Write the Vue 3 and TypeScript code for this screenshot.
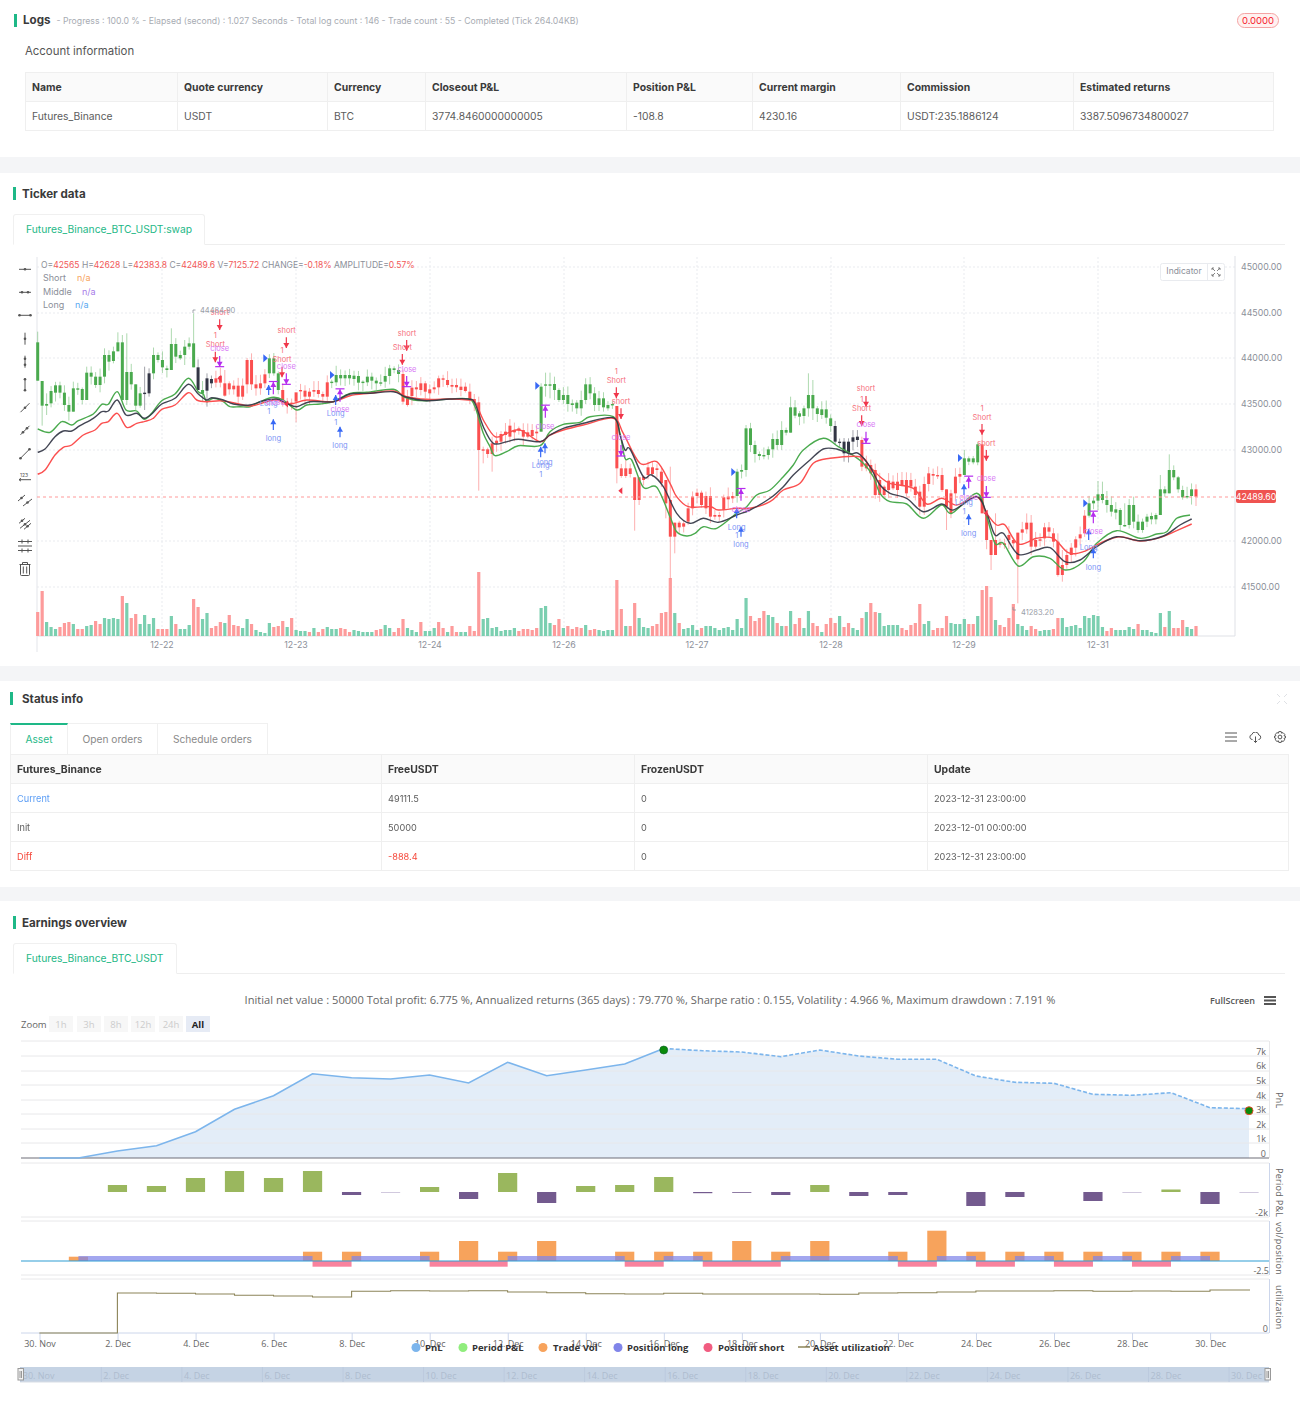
<script setup lang="ts">
const candleSrc =
  '277-392,393-467,462-467,423-460,406-428,406-428,428-465,465-485,415-485,415-417,417-450,368-450,368-380,380-405,380-405,315-380,315-335,304-333,277-304,277-450,366-450,366-403,403-467,430-467,428-430,370-430,315-370,315-330,330-352,355-360,282-360,282-320,315-325,290-315,280-290,280-352,352-420,420-430,385-422,387-400,385-398,378-398,400-437,400-418,407-418,407-440,407-440,330-403,330-403,403-415,400-415,373-400,325-370,325-370,370-420,420-460,455-465,458-460,427-455,420-423,422-440,425-440,420-425,420-432,432-440,397-440,395-398,375-397,375-385,375-385,375-385,377-387,378-398,395-398,380-397,380-392,392-400,397-400,378-395,355-378,355-360,360-372,372-455,440-465,413-438,412-418,400-420,400-425,418-430,412-418,385-412,385-388,390-405,' +
  '405-410,405-412,410-420,410-423,425-447,447-457,457-600,598-600,598-612,580-612,572-580,552-575,545-555,527-560,540-547,535-542,540-560,547-560,540-558,545-550,410-545,403-405,403-405,402-420,420-450,435-450,435-462,460-465,458-475,450-475,403-450,403-430,430-465,445-465,445-472,465-475,462-465,468-655,655-678,655-678,655-672,682-750,682-750,680-690,652-675,652-672,655-660,665-700,690-760,750-860,818-860,818-832,820-830,775-815,740-775,728-738,728-765,738-775,738-800,795-800,795-800,742-780,740-748,738-745,665-738,660-665,535-660,535-585,585-612,612-618,615-617,598-615,567-598,567-585,540-585,540-548,472-548,472-497,490-500,475-498,435-475,435-475,475-492,478-495,478-503,505-528,528-575,575-578,575-610,575-610,562-575,560-570,570-650,640-655,645-670,660-735,690-735,' +
  '710-735,692-720,695-715,695-720,690-705,690-730,690-710,710-735,725-770,702-770,670-702,672-677,675-678,675-720,718-770,730-790,680-730,672-680,625-675,625-635,625-637,583-637,583-790,790-870,870-915,870-915,880-883,880-885,855-870,870-880,848-928,838-848,818-838,818-890,870-890,868-872,832-865,832-845,850-875,875-975,945-975,915-945,893-915,868-893,853-865,797-850,760-797,752-760,733-752,732-750,750-765,765-785,778-788,780-825,825-827,765-825,765-815,815-840,815-840,800-815,798-808,795-808,718-795,718-730,660-730,660-682,682-718,720-742,738-742,718-738,718-740'

const colorRanges: [number, number, string][] = [
  [0, 23, 'g'], [24, 25, 'k'], [26, 35, 'g'], [36, 36, 'k'], [37, 37, 'g'], [38, 39, 'k'], [40, 51, 'r'], [52, 54, 'g'],
  [55, 65, 'r'], [66, 81, 'g'], [82, 112, 'r'], [113, 129, 'g'], [130, 156, 'r'], [157, 178, 'g'], [179, 184, 'k'],
  [185, 207, 'r'], [208, 211, 'g'], [212, 235, 'r'], [236, 259, 'g'], [260, 260, 'r']
]
const palette: Record<string, string> = { g: '#4aaa4e', r: '#fb4f4f', k: '#333645' }

const wickOverride: Record<number, [number, number]> = {
  0: [245, 392], 1: [393, 527], 2: [430, 495], 5: [395, 445], 7: [440, 512], 8: [395, 485], 11: [350, 450], 15: [295, 400],
  17: [290, 340], 18: [247, 304], 19: [255, 450], 20: [250, 465], 22: [403, 480], 24: [350, 480], 25: [355, 440], 30: [235, 360],
  33: [270, 345], 35: [190, 352], 36: [328, 420], 38: [370, 470], 42: [360, 440], 48: [310, 420], 55: [400, 470], 58: [455, 517],
  99: [440, 722], 100: [590, 640], 102: [560, 665], 130: [470, 700], 134: [682, 842], 135: [682, 765], 142: [650, 985], 143: [818, 910],
  113: [400, 545], 114: [368, 440], 115: [368, 445], 116: [380, 450], 141: [690, 805], 159: [525, 680], 169: [440, 548], 173: [370, 500], 174: [390, 510],
  212: [548, 790], 214: [870, 960], 215: [790, 915], 220: [848, 1060], 204: [718, 840], 199: [680, 795], 229: [850, 980], 230: [900, 995],
  208: [600, 675], 238: [693, 780], 239: [695, 760], 254: [613, 730], 252: [675, 795], 246: [740, 835], 244: [760, 830], 260: [703, 768]
}

const rnd = (i: number, s: number) => {
  const v = Math.sin(i * 12.9898 + s * 78.233) * 43758.5453
  return v - Math.floor(v)
}
const cx = (i: number) => 37.7 + 4.455 * i
const zy = (v: number) => 250 + v / 3

const candles = candleSrc.split(',').map((s, i) => {
  const [a, b] = s.split('-').map(Number)
  const code = colorRanges.find((r) => i >= r[0] && i <= r[1])?.[2] ?? 'g'
  const ov = wickOverride[i]
  const hi = ov ? ov[0] : a - 4 - rnd(i, 1) * 24
  const lo = ov ? ov[1] : b + 4 + rnd(i, 2) * 24
  return {
    x: cx(i),
    top: zy(a),
    h: Math.max(1.4, (b - a) / 3),
    hi: zy(hi),
    lo: zy(lo),
    color: palette[code]
  }
})

const volSrc =
  '24r,45r,14g,9g,7g,9r,13r,14r,12g,7r,7r,10g,11g,15r,12r,18g,17g,18g,17g,40r,33g,18r,22r,12g,21g,12g,18g,7r,7r,7r,20g,12r,7g,7g,11g,37r,29r,17g,23g,8r,10r,14r,13g,21r,11r,10r,8g,17g,12r,6g,4g,3g,13g,9r,10r,15r,9g,18r,6g,5g,5g,4r,8g,4r,7r,9g,7g,7g,8r,7r,4r,6g,5g,4g,4g,4g,6r,7r,11g,8g,4r,8r,17r,8g,6g,4g,14r,5g,5g,8g,14r,8r,4g,' +
  '10r,4r,4g,4g,10r,5r,64r,17g,18g,8g,9g,5g,6g,6g,8g,5r,7r,7r,6r,8r,28g,30g,13g,11r,17r,8g,10r,7r,9r,8r,11g,6r,7r,6g,5g,6g,6g,56r,27r,10g,10r,33r,18g,9g,8g,10r,12r,23r,24r,58r,23g,13r,7g,8g,11g,6g,8r,10g,10g,8g,6g,8g,9g,6g,17g,8g,38g,20r,15r,18r,25r,21g,19g,13r,10g,10r,25g,12r,18r,8g,25g,13r,10r,4g,12r,18r,13r,20g,9r,13r,8g,6g,18r,24g,33r,24r,23g,' +
  '10g,11g,11g,11g,8r,6r,11r,13r,32r,12g,15g,6r,8r,8r,20r,13g,12g,12g,17g,12r,12r,20g,46r,50r,39r,16g,11r,9r,18r,32r,12g,10g,6g,10r,7r,5g,6g,6g,7r,18r,18g,9g,10g,11g,8g,20g,18g,21g,20g,9g,5r,8r,6g,6g,6g,9g,7g,12r,6g,6g,4g,3g,23g,9r,25g,8r,8r,16r,9g,7g,10r'
const vols = volSrc.split(',').map((s, i) => {
  const h = parseInt(s, 10)
  return { x: cx(i), h, y: 636 - h, color: s.endsWith('r') ? '#fd9b9b' : '#7bcfb0' }
})

type P = [number, number]
const zone = (off: number, pts: P[]): P[] => pts.map(([x, y]) => [off + x / 3, zy(y)] as P)
const smooth = (pts: P[]) => {
  let d = `M${pts[0][0].toFixed(1)} ${pts[0][1].toFixed(1)}`
  for (let i = 0; i < pts.length - 1; i++) {
    const p0 = pts[Math.max(0, i - 1)]
    const p1 = pts[i]
    const p2 = pts[i + 1]
    const p3 = pts[Math.min(pts.length - 1, i + 2)]
    const c1x = p1[0] + (p2[0] - p0[0]) / 6
    const c1y = p1[1] + (p2[1] - p0[1]) / 6
    const c2x = p2[0] - (p3[0] - p1[0]) / 6
    const c2y = p2[1] - (p3[1] - p1[1]) / 6
    d += `C${c1x.toFixed(1)} ${c1y.toFixed(1)} ${c2x.toFixed(1)} ${c2y.toFixed(1)} ${p2[0].toFixed(1)} ${p2[1].toFixed(1)}`
  }
  return d
}

const lineGreen = smooth([
  ...zone(0, [[113, 537], [150, 547], [185, 515], [215, 525], [235, 512], [280, 492], [305, 463], [325, 463], [352, 425], [378, 480], [410, 483], [432, 508], [455, 490], [485, 452], [525, 432], [565, 385], [595, 425], [610, 432], [620, 455], [640, 445], [670, 455], [690, 470], [720, 470], [750, 470], [780, 455], [820, 442], [850, 450], [890, 480], [920, 465], [960, 462], [1000, 455], [1050, 430], [1100, 427], [1180, 418], [1210, 440], [1240, 450], [1280, 452], [1350, 447]]),
  ...zone(450, [[55, 447], [75, 470], [100, 550], [120, 590], [135, 617], [170, 605], [205, 587], [270, 587], [300, 545], [340, 523], [390, 517], [420, 500], [490, 500], [510, 550], [525, 625], [545, 630], [580, 712], [620, 712], [660, 800], [680, 845], [710, 858], [735, 850], [760, 830], [800, 835], [860, 790], [890, 770], [920, 735], [960, 720], [1000, 680], [1030, 645], [1060, 600], [1120, 565], [1165, 590], [1200, 610], [1240, 640], [1270, 680]]),
  ...zone(880, [[0, 730], [30, 755], [80, 762], [130, 805], [185, 765], [215, 790], [290, 730], [320, 800], [345, 880], [370, 880], [415, 948], [460, 920], [510, 925], [555, 960], [610, 935], [650, 880], [710, 842], [780, 865], [830, 852], [860, 845], [890, 805], [930, 795]])
])
const lineBlack = smooth([
  ...zone(0, [[113, 607], [135, 597], [165, 560], [190, 543], [215, 543], [240, 527], [280, 505], [305, 485], [325, 483], [352, 450], [378, 495], [410, 490], [432, 505], [455, 492], [485, 462], [525, 445], [565, 403], [595, 432], [620, 450], [635, 443], [670, 450], [700, 462], [750, 465], [790, 452], [830, 447], [860, 460], [890, 470], [930, 455], [1000, 455], [1050, 432], [1110, 430], [1180, 425], [1220, 442], [1280, 452], [1350, 447]]),
  ...zone(450, [[55, 447], [75, 460], [100, 530], [130, 580], [170, 575], [205, 568], [270, 575], [300, 555], [340, 535], [400, 520], [490, 503], [510, 555], [525, 600], [540, 597], [580, 680], [605, 675], [640, 710], [680, 790], [720, 820], [760, 805], [805, 817], [860, 795], [900, 780], [960, 745], [1000, 710], [1030, 675], [1080, 630], [1120, 597], [1160, 597], [1200, 612], [1225, 610], [1260, 650]]),
  ...zone(880, [[0, 705], [30, 730], [80, 745], [130, 785], [185, 762], [220, 780], [290, 740], [320, 790], [345, 855], [370, 850], [415, 913], [470, 900], [510, 893], [555, 935], [600, 930], [650, 890], [710, 860], [780, 872], [850, 858], [900, 825], [935, 807]])
])
const lineRed = smooth([
  ...zone(0, [[113, 673], [135, 660], [165, 615], [190, 592], [215, 585], [250, 555], [285, 540], [305, 520], [325, 515], [352, 490], [380, 532], [410, 520], [432, 515], [460, 505], [485, 478], [525, 465], [565, 428], [590, 450], [620, 455], [660, 452], [700, 458], [750, 468], [800, 455], [830, 450], [870, 462], [920, 450], [1000, 455], [1050, 437], [1110, 430], [1180, 423], [1220, 440], [1280, 448], [1350, 447]]),
  ...zone(450, [[55, 450], [75, 455], [100, 510], [135, 560], [170, 550], [210, 540], [270, 575], [300, 555], [340, 540], [400, 525], [490, 505], [520, 550], [570, 640], [620, 635], [660, 700], [680, 740], [715, 770], [780, 770], [805, 780], [860, 775], [900, 775], [960, 755], [1000, 720], [1050, 700], [1090, 640], [1140, 625], [1230, 620], [1260, 650]]),
  ...zone(880, [[0, 680], [30, 700], [100, 715], [140, 762], [185, 745], [230, 765], [290, 740], [320, 790], [350, 825], [375, 825], [415, 882], [470, 865], [520, 865], [565, 908], [610, 905], [670, 875], [720, 860], [780, 873], [840, 863], [890, 842], [935, 822]])
])

const Z2 = 0
const Z3 = 450
const Z4 = 880
const labelColor: Record<string, string> = { s: '#f6707d', c: '#d878f5', l: '#7c94f5' }
const rawLabels: [number, string, number, number, string][] = [
  [Z2, 'short', 660, 187, 's'], [Z2, '1', 646, 256, 's'], [Z2, 'Short', 646, 284, 's'], [Z2, 'close', 659, 295, 'c'],
  [Z2, 'short', 860, 241, 's'], [Z2, '1', 846, 302, 's'], [Z2, 'Short', 846, 329, 's'], [Z2, 'close', 859, 348, 'c'],
  [Z2, 'short', 1221, 250, 's'], [Z2, 'Short', 1207, 291, 's'], [Z2, 'close', 1221, 357, 'c'],
  [Z2, 'Long', 806, 459, 'l'], [Z2, 'close', 826, 456, 'c'], [Z2, '1', 806, 485, 'l'], [Z2, 'long', 820, 564, 'l'],
  [Z2, 'close', 1020, 479, 'c'], [Z2, 'Long', 1007, 490, 'l'], [Z2, '1', 1007, 516, 'l'], [Z2, 'long', 1020, 587, 'l'],
  [Z3, 'close', 285, 528, 'c'], [Z3, 'long', 285, 636, 'l'], [Z3, 'Long', 272, 647, 'l'], [Z3, '1', 272, 673, 'l'],
  [Z3, '1', 499, 363, 's'], [Z3, 'Short', 499, 390, 's'], [Z3, 'short', 513, 455, 's'], [Z3, 'close', 513, 562, 'c'],
  [Z3, 'close', 873, 778, 'c'], [Z3, 'Long', 860, 832, 'l'], [Z3, '1', 860, 857, 'l'], [Z3, 'long', 873, 884, 'l'],
  [Z3, 'short', 1248, 416, 's'], [Z3, '1', 1235, 447, 's'], [Z3, 'Short', 1235, 474, 's'], [Z3, 'close', 1248, 524, 'c'],
  [Z4, '1', 306, 474, 's'], [Z4, 'Short', 306, 501, 's'], [Z4, 'short', 319, 579, 's'], [Z4, 'close', 319, 686, 'c'],
  [Z4, 'close', 266, 743, 'c'], [Z4, 'Long', 252, 758, 'l'], [Z4, '1', 252, 784, 'l'], [Z4, 'long', 266, 849, 'l'],
  [Z4, 'close', 640, 845, 'c'], [Z4, 'Long', 626, 893, 'l'], [Z4, 'long', 640, 951, 'l']
]
const labels = rawLabels.map(([o, t, x, y, c]) => ({ t, x: o + x / 3, y: zy(y) + 2.6, color: labelColor[c] }))

const rawArrows: [number, string, number, number, number][] = [
  [Z2, 'r', 659, 208, 240], [Z2, 'r', 646, 305, 337], [Z2, 'pd', 659, 318, 350],
  [Z2, 'r', 859, 262, 294], [Z2, 'r', 846, 350, 382], [Z2, 'pd', 859, 370, 403],
  [Z2, 'r', 1220, 270, 302], [Z2, 'r', 1207, 312, 344], [Z2, 'pd', 1220, 378, 410],
  [Z2, 'b', 806, 405, 435], [Z2, 'pu', 820, 396, 433], [Z2, 'b', 820, 508, 540],
  [Z2, 'pu', 1020, 418, 455], [Z2, 'b', 1007, 435, 465], [Z2, 'b', 1020, 530, 562],
  [Z3, 'pu', 286, 467, 503], [Z3, 'b', 272, 590, 622], [Z3, 'b', 285, 580, 610],
  [Z3, 'r', 499, 412, 444], [Z3, 'r', 513, 475, 507], [Z3, 'pd', 513, 585, 618],
  [Z3, 'pu', 873, 717, 752], [Z3, 'b', 860, 775, 805], [Z3, 'b', 873, 830, 860],
  [Z3, 'r', 1248, 438, 470], [Z3, 'r', 1235, 496, 528], [Z3, 'pd', 1248, 545, 580],
  [Z4, 'r', 306, 522, 554], [Z4, 'r', 319, 600, 632], [Z4, 'pd', 319, 708, 742],
  [Z4, 'pu', 266, 680, 715], [Z4, 'b', 252, 703, 735], [Z4, 'b', 266, 793, 825],
  [Z4, 'pu', 640, 785, 820], [Z4, 'b', 626, 838, 870], [Z4, 'b', 640, 895, 925]
]
const arrows = rawArrows.map(([o, k, x, a, b]) => {
  const X = o + x / 3
  const y1 = zy(a)
  const y2 = zy(b)
  const down = k === 'r' || k === 'pd'
  const color = k === 'r' ? '#f0364a' : k === 'b' ? '#3768f5' : '#b52bee'
  const head = down
    ? `${X - 3},${y2 - 5} ${X + 3},${y2 - 5} ${X},${y2}`
    : `${X - 3},${y1 + 5} ${X + 3},${y1 + 5} ${X},${y1}`
  const barY = k === 'pd' ? y2 : k === 'pu' ? y1 - 0.5 : null
  return { X, y1, y2, color, head, barY }
})
const rawTri: [number, number, number, string][] = [
  [Z2, 790, 325, 'b'], [Z2, 990, 375, 'b'], [Z3, 256, 407, 'b'], [Z3, 844, 666, 'b'], [Z4, 234, 624, 'b'], [Z4, 610, 760, 'b'],
  [Z2, 664, 385, 'r'], [Z2, 864, 462, 'r'], [Z3, 517, 722, 'r'], [Z4, 323, 790, 'r']
]
const tris = rawTri.map(([o, x, y, k]) => {
  const X = o + x / 3
  const Y = zy(y)
  return k === 'b'
    ? { p: `${X},${Y - 4} ${X + 4.5},${Y} ${X},${Y + 4}`, c: '#3768f5' }
    : { p: `${X},${Y - 3.5} ${X - 4},${Y} ${X},${Y + 3.5}`, c: '#f0364a' }
})

const gridY = [313, 358, 404, 450, 541, 587, 267]
const gridX = [162, 296, 430, 564, 697, 831, 964, 1098]
const dates = ['12-22', '12-23', '12-24', '12-26', '12-27', '12-28', '12-29', '12-31']
const priceTicks = [['45000.00', 267], ['44500.00', 313], ['44000.00', 358], ['43500.00', 404], ['43000.00', 450], ['42000.00', 541], ['41500.00', 587]] as [string, number][]

const toolY = [269.3, 292.3, 315.3, 338.7, 361.7, 384.7, 407.7, 430.3, 453.7, 476.7, 500, 523.3, 546, 569]
const tools: { d: string; dots: P[] }[] = [
  { d: 'M-6 0H6', dots: [[0, 0]] },
  { d: 'M-6 0H6', dots: [[-3, 0], [3, 0]] },
  { d: 'M-6 0H6', dots: [[-5.5, 0], [5.5, 0]] },
  { d: 'M0-6V6', dots: [[0, 0]] },
  { d: 'M0-6V6', dots: [[0, -3], [0, 3]] },
  { d: 'M0-6V6', dots: [[0, -5.5], [0, 5.5]] },
  { d: 'M-4.5 4.5L4.5-4.5', dots: [[0, 0]] },
  { d: 'M-4.5 4.5L4.5-4.5', dots: [[-2, 2], [2, -2]] },
  { d: 'M-4.5 4.5L4.5-4.5', dots: [[-4.5, 4.5], [4.5, -4.5]] },
  { d: 'M-6 3H6M-6 3L-4 1.6M-6 3L-4 4.4', dots: [] },
  { d: 'M-7 1L0-5M-2 6L7-1', dots: [[-3.5, -2], [2.5, 2.5]] },
  { d: 'M-6 0L0-5M-5 5L5-3M-1 6L6 0', dots: [[-3, -2.5], [0, 1], [2.5, 3]] },
  { d: 'M-7-4.5H7M-7 0H7M-7 4.5H7M-3-6.5V-2.5M3-6.5V-2.5M-3 2.5V6.5M3 2.5V6.5', dots: [] },
  { d: 'M-5.5-4.5H5.5M-2.5-4.5V-6.5H2.5V-4.5M-4.5-4.5V5.5Q-4.5 6.5-3.5 6.5H3.5Q4.5 6.5 4.5 5.5V-4.5M-1.7-2.5V4.5M1.7-2.5V4.5', dots: [] }
]

const dx = (i: number) => 39.4 + 39.02 * i
const pnlY = [1158, 1158, 1151, 1145.7, 1131.7, 1109.3, 1095.7, 1073.7, 1077.7, 1079, 1075, 1083, 1062.3, 1075.7, 1070, 1064, 1048.5]
const pnlAfter = [1048.5, 1050.7, 1052, 1056.7, 1050, 1056, 1059.3, 1059.3, 1076, 1082.3, 1083.3, 1094.3, 1095.3, 1092.7, 1107.7, 1108.7]
const pnlSolid = pnlY.map((y, i) => `${dx(i).toFixed(1)},${y}`).join(' ')
const pnlDash = pnlAfter.map((y, i) => `${dx(i + 16).toFixed(1)},${y}`).join(' ')
const pnlArea = `${dx(0)},1158 ${pnlSolid} ${pnlDash} ${dx(31)},1158`

const pnlBars: [number, number, string][] = [
  [2, 1185, 'g'], [3, 1186, 'g'], [4, 1178, 'g'], [5, 1171, 'g'], [6, 1178, 'g'], [7, 1171, 'g'], [8, 1195, 'p'], [9, 1192.8, 'l'],
  [10, 1187, 'g'], [11, 1199, 'p'], [12, 1173, 'g'], [13, 1203, 'p'], [14, 1186, 'g'], [15, 1185, 'g'], [16, 1177, 'g'], [17, 1193.2, 'p'],
  [18, 1192.8, 'p'], [19, 1195, 'p'], [20, 1185, 'g'], [21, 1196, 'p'], [22, 1195, 'p'], [24, 1206, 'p'], [25, 1197, 'p'], [27, 1201, 'p'],
  [28, 1192.8, 'l'], [29, 1189.5, 'g'], [30, 1204, 'p'], [31, 1192.8, 'l']
]
const barFill: Record<string, string> = { g: '#9ab75e', p: '#735a8e', l: '#c6bcd6' }
const periodBars = pnlBars.map(([i, y, k]) => ({
  x: dx(i) - 9.6,
  y: Math.min(y, 1192),
  h: Math.abs(y - 1192),
  c: barFill[k]
}))

const volDay: [number, number][] = [
  [1, 1256.7], [7, 1251.7], [8, 1251.7], [10, 1251.7], [11, 1241], [12, 1251.7], [13, 1241], [15, 1251.7], [16, 1251.7], [17, 1251.7],
  [18, 1241], [19, 1251.7], [20, 1241], [22, 1251.7], [23, 1230.7], [24, 1251.7], [25, 1251.7], [26, 1251.7], [27, 1251.7], [28, 1251.7],
  [29, 1251.7], [30, 1251.7]
]
const orangeBars = volDay.map(([i, y]) => ({ x: dx(i) - 9.6, y, h: 1261 - y }))
const longRanges: P[] = [[1, 7], [8, 10], [12, 15], [16, 17], [19, 22], [23, 24], [25, 26], [27, 28], [29, 30]]
const shortRanges: P[] = [[7, 8], [10, 12], [15, 16], [17, 19], [22, 23], [24, 25], [26, 27], [28, 29]]
const rangeRect = (r: P) => ({ x: dx(r[0]), w: dx(r[1]) - dx(r[0]) })
const longBars = longRanges.map(rangeRect)
const shortBars = shortRanges.map(rangeRect)

const utilSteps = [1333, 1333, 1293, 1293.3, 1294, 1295.3, 1296, 1297, 1291.3, 1290.7, 1291, 1290.7, 1292, 1292.7, 1293.7, 1294, 1293.3, 1294, 1294, 1294, 1294.3, 1293, 1292.7, 1292, 1291, 1291, 1290.7, 1291.3, 1291, 1291.3, 1290, 1290]
const utilPath = utilSteps
  .map((y, i) => {
    const x = dx(i)
    return i === 0 ? `M${x} ${y}` : `H${x.toFixed(1)}V${y}`
  })
  .join('') + `H${dx(31) + 1}`

const yPnl = [['7k', 1055], ['6k', 1069], ['5k', 1084], ['4k', 1099], ['3k', 1113], ['2k', 1128], ['1k', 1142], ['0', 1157]] as [string, number][]
const gridPnl = [1041, 1056, 1071, 1085, 1100, 1114, 1129, 1143]
const months = ['30. Nov', '2. Dec', '4. Dec', '6. Dec', '8. Dec', '10. Dec', '12. Dec', '14. Dec', '16. Dec', '18. Dec', '20. Dec', '22. Dec', '24. Dec', '26. Dec', '28. Dec', '30. Dec']
const dateTicks = months.map((t, i) => ({ t, x: dx(i * 2) + 0.6 }))
const navTicks = months.map((t, i) => ({ t, x: 22.8 + 80.55 * i }))
const zoomBtns = [['1h', 49], ['3h', 77], ['8h', 104], ['12h', 131], ['24h', 159]] as [string, number][]
const legendDots = [
  { t: 'PnL', x: 416, c: '#7cb5ec', tx: 425 },
  { t: 'Period P&L', x: 463, c: '#90ed7d', tx: 472 },
  { t: 'Trade Vol', x: 543, c: '#f7a35c', tx: 553 },
  { t: 'Position long', x: 618, c: '#8085e9', tx: 627 },
  { t: 'Position short', x: 708, c: '#f15c80', tx: 718 }
]

const accountHead = ['Name', 'Quote currency', 'Currency', 'Closeout P&L', 'Position P&L', 'Current margin', 'Commission', 'Estimated returns']
const accountRow = ['Futures_Binance', 'USDT', 'BTC', '3774.8460000000005', '-108.8', '4230.16', 'USDT:235.1886124', '3387.5096734800027']
const accountWidths = [152, 150, 98, 201, 126, 148, 173, 200]
const statusWidths = [371, 253, 293, 361]
const statusRows = [
  { name: 'Current', cls: 'blue', free: '49111.5', freeCls: '', frozen: '0', update: '2023-12-31 23:00:00' },
  { name: 'Init', cls: '', free: '50000', freeCls: '', frozen: '0', update: '2023-12-01 00:00:00' },
  { name: 'Diff', cls: 'red', free: '-888.4', freeCls: 'red', frozen: '0', update: '2023-12-31 23:00:00' }
]
</script>

<template>
  <div class="page">
    <section class="card logs">
      <div class="logs-head">
        <div class="title">Logs</div>
        <span class="progress">- Progress : 100.0 % - Elapsed (second) : 1.027 Seconds - Total log count : 146 - Trade count : 55 - Completed (Tick 264.04KB)</span>
        <span class="badge">0.0000</span>
      </div>
      <div class="account">Account information</div>
      <table class="tbl tbl-account">
        <colgroup><col v-for="w in accountWidths" :key="w" :width="w" /></colgroup>
        <thead><tr><th v-for="h in accountHead" :key="h">{{ h }}</th></tr></thead>
        <tbody><tr><td v-for="c in accountRow" :key="c">{{ c }}</td></tr></tbody>
      </table>
    </section>

    <section class="card ticker">
      <div class="title">Ticker data</div>
      <div class="tabline"><div class="tab">Futures_Binance_BTC_USDT:swap</div></div>
      <svg class="chart" width="1300" height="421" viewBox="0 245 1300 421">
        <g stroke="#e9ebef" stroke-dasharray="2 2">
          <line v-for="y in gridY" :key="y" x1="37" x2="1235" :y1="y" :y2="y" />
          <line v-for="x in gridX" :key="x" :x1="x" :x2="x" y1="257" y2="636" />
        </g>
        <line x1="37" x2="37" y1="257" y2="652" stroke="#e3e5ea" />
        <line x1="1235" x2="1235" y1="256" y2="636" stroke="#dfe1e6" />
        <line x1="37" x2="1235" y1="636" y2="636" stroke="#dfe1e6" />

        <rect v-for="(v, i) in vols" :key="'v' + i" :x="v.x - 1.6" :y="v.y" width="3.2" :height="v.h" :fill="v.color" />

        <g v-for="(c, i) in candles" :key="'c' + i">
          <line :x1="c.x" :x2="c.x" :y1="c.hi" :y2="c.lo" :stroke="c.color" stroke-opacity=".45" />
          <rect :x="c.x - 1.5" :y="c.top" width="3" :height="c.h" :fill="c.color" />
        </g>

        <line x1="37" x2="1235" y1="497" y2="497" stroke="#f99" stroke-dasharray="3 3" />

        <path :d="lineGreen" fill="none" stroke="#4aaa4e" stroke-width="1.4" />
        <path :d="lineRed" fill="none" stroke="#fb4f4f" stroke-width="1.4" />
        <path :d="lineBlack" fill="none" stroke="#333645" stroke-width="1.4" stroke-opacity=".92" />

        <polygon v-for="(t, i) in tris" :key="'t' + i" :points="t.p" :fill="t.c" />
        <g v-for="(a, i) in arrows" :key="'a' + i">
          <line :x1="a.X" :x2="a.X" :y1="a.y1" :y2="a.y2" :stroke="a.color" stroke-width="1.2" />
          <polygon :points="a.head" :fill="a.color" />
          <line v-if="a.barY !== null" :x1="a.X - 4.5" :x2="a.X + 4.5" :y1="a.barY" :y2="a.barY" :stroke="a.color" stroke-width="1.2" />
        </g>
        <text v-for="(l, i) in labels" :key="'l' + i" class="mark" :x="l.x" :y="l.y" :fill="l.color" text-anchor="middle">{{ l.t }}</text>

        <path d="M193 313V310H195.5" fill="none" stroke="#8a8f99" stroke-width=".8" />
        <text class="mark" x="200" y="313" fill="#9a9ea8">44484.90</text>
        <path d="M1013 607V610H1016" fill="none" stroke="#8a8f99" stroke-width=".8" />
        <text class="mark" x="1021" y="615" fill="#9a9ea8">41283.20</text>

        <text class="legend top" x="41" y="268">
          <tspan class="grey">O=</tspan><tspan class="val">42565 </tspan><tspan class="grey">H=</tspan><tspan class="val">42628 </tspan><tspan class="grey">L=</tspan><tspan class="val">42383.8 </tspan><tspan class="grey">C=</tspan><tspan class="val">42489.6 </tspan><tspan class="grey">V=</tspan><tspan class="val">7125.72 </tspan><tspan class="grey">CHANGE=</tspan><tspan class="val">-0.18% </tspan><tspan class="grey">AMPLITUDE=</tspan><tspan class="val">0.57%</tspan>
        </text>
        <text class="legend grey" x="43" y="281">Short</text><text class="legend" x="77" y="281" fill="#f7a35c">n/a</text>
        <text class="legend grey" x="43" y="294.5">Middle</text><text class="legend" x="82" y="294.5" fill="#a77be8">n/a</text>
        <text class="legend grey" x="43" y="308">Long</text><text class="legend" x="75" y="308" fill="#5aa9f0">n/a</text>

        <g v-for="(t, i) in tools" :key="'i' + i" :transform="`translate(25 ${toolY[i]})`">
          <path :d="t.d" fill="none" stroke="#555" stroke-width="1" />
          <circle v-for="(d, j) in t.dots" :key="j" :cx="d[0]" :cy="d[1]" r="1.3" fill="#555" />
          <text v-if="i === 9" x="-1" y="0.5" class="tiny" text-anchor="middle">123</text>
        </g>

        <text v-for="(d, i) in dates" :key="d" class="axis" :x="gridX[i]" y="648" text-anchor="middle">{{ d }}</text>
        <text v-for="p in priceTicks" :key="p[0]" class="axis" x="1241" :y="p[1] + 3">{{ p[0] }}</text>
        <rect x="1236" y="490" width="40" height="13" rx="2" fill="#ef5350" />
        <text class="tag" x="1256" y="500" text-anchor="middle">42489.60</text>

        <rect x="1160.5" y="263.5" width="64" height="17" rx="2" fill="#fff" stroke="#e9ebef" />
        <line x1="1207.5" x2="1207.5" y1="264" y2="280" stroke="#e9ebef" />
        <text class="indicator" x="1184" y="274" text-anchor="middle">Indicator</text>
        <path d="M1212 268l3 3M1212 268h2M1212 268v2M1220 268l-3 3M1220 268h-2M1220 268v2M1212 276l3-3M1212 276h2M1212 276v-2M1220 276l-3-3M1220 276h-2M1220 276v-2" fill="none" stroke="#777" stroke-width=".9" />
      </svg>
    </section>

    <section class="card status">
      <div class="title t-status">Status info</div>
      <svg class="expand" width="10" height="10" viewBox="0 0 10 10"><path d="M0 0l3 3M10 0L7 3M0 10l3-3M10 10L7 7" stroke="#dfe1e5" fill="none" /></svg>
      <div class="status-tabs">
        <div class="stab active">Asset</div>
        <div class="stab">Open orders</div>
        <div class="stab">Schedule orders</div>
        <div class="tools">
          <svg width="12" height="10" viewBox="0 0 12 10"><path d="M0 1H12M0 5H12M0 9H12" stroke="#555" fill="none" /></svg>
          <svg width="13" height="11" viewBox="0 0 13 11"><path d="M3.5 7.5H3A2.5 2.5 0 0 1 2.8 2.6 3.6 3.6 0 0 1 9.8 3 2.3 2.3 0 0 1 10 7.5H9.5M6.5 4.5V10.5M4.8 8.8L6.5 10.5 8.2 8.8" stroke="#555" fill="none" /></svg>
          <svg width="12" height="12" viewBox="0 0 12 12"><path d="M4.8.6H7.2L7.6 2.2 9 1.6 10.8 3.4 10 4.8 11.4 5V7L10 7.4 10.8 8.8 9 10.5 7.6 9.8 7.2 11.4H4.8L4.4 9.8 3 10.5 1.2 8.8 2 7.4.6 7V5L2 4.8 1.2 3.4 3 1.6 4.4 2.2Z" stroke="#555" fill="none" /><circle cx="6" cy="6" r="1.9" stroke="#555" fill="none" /></svg>
        </div>
      </div>
      <table class="tbl tbl-status">
        <colgroup><col v-for="w in statusWidths" :key="w" :width="w" /></colgroup>
        <thead><tr><th>Futures_Binance</th><th>FreeUSDT</th><th>FrozenUSDT</th><th>Update</th></tr></thead>
        <tbody>
          <tr v-for="r in statusRows" :key="r.name">
            <td :class="r.cls">{{ r.name }}</td>
            <td :class="r.freeCls">{{ r.free }}</td>
            <td>{{ r.frozen }}</td>
            <td>{{ r.update }}</td>
          </tr>
        </tbody>
      </table>
    </section>

    <section class="card earnings">
      <div class="title">Earnings overview</div>
      <div class="tabline"><div class="tab tab-e">Futures_Binance_BTC_USDT</div></div>
      <svg class="chart" width="1300" height="430" viewBox="0 974 1300 430">
        <text class="hc-title" x="650" y="1004" text-anchor="middle">Initial net value : 50000 Total profit: 6.775 %, Annualized returns (365 days) : 79.770 %, Sharpe ratio : 0.155, Volatility : 4.966 %, Maximum drawdown : 7.191 %</text>
        <text class="hc-full" x="1210" y="1004">FullScreen</text>
        <path d="M1264 997H1276M1264 1000.5H1276M1264 1004H1276" stroke="#555" stroke-width="2" />

        <text class="hc-zoom" x="21" y="1027.5">Zoom</text>
        <g v-for="b in zoomBtns" :key="b[0]">
          <rect :x="b[1]" y="1016" width="24" height="16" fill="#f7f7f7" />
          <text class="hc-btn" :x="b[1] + 12" y="1027.5" text-anchor="middle">{{ b[0] }}</text>
        </g>
        <rect x="186" y="1016" width="24" height="16" fill="#e6ebf5" />
        <text class="hc-btn on" x="198" y="1027.5" text-anchor="middle">All</text>

        <polygon :points="pnlArea" fill="#e3edf8" />
        <g stroke="#e8e8ea">
          <line v-for="y in gridPnl" :key="y" x1="21" x2="1269" :y1="y" :y2="y" />
          <line x1="21" x2="1269" y1="1163" y2="1163" />
          <line x1="21" x2="1269" y1="1217" y2="1217" />
          <line x1="21" x2="1269" y1="1221" y2="1221" />
          <line x1="21" x2="1269" y1="1275" y2="1275" />
          <line x1="21" x2="1269" y1="1279" y2="1279" />
        </g>
        <line x1="1269.5" x2="1269.5" y1="1041" y2="1158" stroke="#e8e8ea" />
        <g stroke="#ccd6eb">
          <line x1="1269.5" x2="1269.5" y1="1163" y2="1217" />
          <line x1="1269.5" x2="1269.5" y1="1221" y2="1275" />
          <line x1="1269.5" x2="1269.5" y1="1279" y2="1333" />
          <line x1="21" x2="1269" y1="1333" y2="1333" />
          <line v-for="d in dateTicks" :key="d.t" :x1="d.x" :x2="d.x" y1="1333" y2="1340" />
        </g>
        <line x1="21" x2="1269" y1="1158" y2="1158" stroke="#6f6f78" stroke-width="1.2" />

        <polyline :points="pnlSolid" fill="none" stroke="#7cb5ec" stroke-width="1.6" />
        <polyline :points="pnlDash" fill="none" stroke="#7cb5ec" stroke-width="1.6" stroke-dasharray="4 2" />
        <circle :cx="dx(16)" cy="1050" r="4" fill="#0a8a0a" stroke="#0b5f2a" stroke-width=".6" />
        <circle :cx="dx(31)" cy="1110.7" r="4" fill="#0a8a0a" stroke="#e2502c" />

        <text v-for="y in yPnl" :key="y[0]" class="hc-axis" x="1266" :y="y[1]" text-anchor="end">{{ y[0] }}</text>
        <text class="hc-axis" x="1268" y="1215.5" text-anchor="end">-2k</text>
        <text class="hc-axis" x="1269" y="1273.5" text-anchor="end">-2.5</text>
        <text class="hc-axis" x="1268" y="1331.5" text-anchor="end">0</text>
        <text class="hc-side" transform="translate(1276 1092) rotate(90)">PnL</text>
        <text class="hc-side" transform="translate(1276 1168) rotate(90)">Period P&amp;L</text>
        <text class="hc-side" transform="translate(1276 1222) rotate(90)">vol/position</text>
        <text class="hc-side" transform="translate(1276 1285) rotate(90)">utilization</text>

        <rect v-for="(b, i) in periodBars" :key="'b' + i" :x="b.x" :y="b.y" width="19.2" :height="b.h" :fill="b.c" />

        <rect v-for="(b, i) in orangeBars" :key="'o' + i" :x="b.x" :y="b.y" width="19.2" :height="b.h" fill="#f7a35c" />
        <rect v-for="(b, i) in shortBars" :key="'s' + i" :x="b.x" y="1261" :width="b.w" height="5.7" fill="#f9829d" />
        <rect v-for="(b, i) in longBars" :key="'p' + i" :x="b.x" y="1256" :width="b.w" height="5" fill="#8085e9" fill-opacity=".72" />
        <line x1="21" x2="1269" y1="1261" y2="1261" stroke="#2f9ed4" stroke-width="1.2" />

        <path :d="utilPath" fill="none" stroke="#8c8458" stroke-width="1.1" />

        <text v-for="d in dateTicks" :key="'d' + d.t" class="hc-axis date" :x="d.x" y="1346.5" text-anchor="middle">{{ d.t }}</text>

        <g v-for="l in legendDots" :key="l.t">
          <circle :cx="l.x" cy="1347.5" r="4.5" :fill="l.c" />
          <text class="hc-legend" :x="l.tx" y="1350.8">{{ l.t }}</text>
        </g>
        <line x1="798" x2="810" y1="1347" y2="1347" stroke="#8c8458" stroke-width="1.5" />
        <text class="hc-legend" x="813" y="1350.8">Asset utilization</text>

        <rect x="20" y="1367" width="1249" height="15" fill="#c5d3e4" />
        <line x1="20" x2="1269" y1="1382" y2="1382" stroke="#d8dde5" />
        <g v-for="(n, i) in navTicks" :key="'n' + i">
          <line :x1="n.x - 2" :x2="n.x - 2" y1="1367" y2="1382" stroke="#bccade" />
          <text class="hc-nav" :x="n.x" y="1379">{{ n.t }}</text>
        </g>
        <g v-for="hx in [17.5, 1264.5]" :key="hx">
          <rect :x="hx + 0.5" y="1368.5" width="5.5" height="11.5" fill="#f2f2f2" stroke="#999" />
          <path :d="`M${hx + 2.5} 1371V1378M${hx + 4} 1371V1378`" stroke="#999" />
        </g>
      </svg>
    </section>
  </div>
</template>

<style>
html, body { margin: 0; background: #f4f5f7; }
</style>

<style scoped>
.page { width: 1300px; height: 1404px; overflow: hidden; font-family: Inter, "Liberation Sans", sans-serif; color: #555; filter: blur(.35px); }
.card { background: #fff; position: relative; }
.logs { height: 157px; padding-top: 14px; box-sizing: border-box; }
.ticker { margin-top: 16px; height: 493px; padding-top: 14px; box-sizing: border-box; }
.status { margin-top: 15px; height: 206px; padding-top: 11px; box-sizing: border-box; }
.earnings { margin-top: 14px; height: 503px; padding-top: 15px; box-sizing: border-box; }
.title { height: 13px; line-height: 15px; margin-left: 13px; padding-left: 6px; border-left: 3px solid #1eb887; font-size: 11.6px; font-weight: 700; color: #3a3a3a; white-space: nowrap; }
.t-status { margin-left: 10px; padding-left: 9px; }
.logs-head { display: flex; align-items: center; height: 13px; padding-right: 21px; }
.logs-head .title { margin-left: 14px; line-height: 13px; }
.progress { font-size: 8.7px; color: #a8acb3; margin-left: 6px; white-space: nowrap; }
.badge { margin-left: auto; width: 42px; text-align: center; height: 15px; line-height: 13px; box-sizing: border-box; border: 1px solid #f5a3a3; border-radius: 8px; background: #fff1f0; color: #f5222d; font-size: 9.5px; }
.account { margin: 18px 0 0 25px; height: 13px; line-height: 13px; font-size: 11.4px; color: #555; }
.tbl { border-collapse: collapse; table-layout: fixed; font-size: 10.3px; }
.tbl th, .tbl td { border: 1px solid #efefef; height: 28px; padding: 0 0 0 6px; text-align: left; box-sizing: content-box; white-space: nowrap; overflow: hidden; }
.tbl th { background: #fafafa; color: #3a3a3a; font-weight: 700; font-size: 10.4px; }
.tbl td { color: #5c5c5c; }
.tbl-account { margin: 14px 0 0 25px; width: 1248px; }
.tbl-status { margin-left: 10px; width: 1278px; font-size: 9.2px; }
.tabline { margin: 14px 15px 0 13px; border-bottom: 1px solid #eee; height: 30px; display: flex; }
.tab { width: 192px; height: 31px; box-sizing: border-box; border: 1px solid #f0f0f0; border-bottom-color: #fff; border-radius: 3px 3px 0 0; line-height: 28px; padding-left: 12px; color: #1eb887; font-size: 10.3px; white-space: nowrap; }
.tab-e { width: 164px; }
.chart { display: block; }
.expand { position: absolute; top: 13px; right: 13px; }
.status-tabs { display: flex; margin: 18px 12px 0 10px; height: 31px; }
.stab { box-sizing: border-box; height: 31px; line-height: 31px; padding: 0 15px; border: 1px solid #f0f0f0; border-left: 0; border-bottom: 0; font-size: 10.2px; color: #8a8a8a; white-space: nowrap; }
.stab.active { border-left: 1px solid #f0f0f0; border-top: 2px solid #1eb887; color: #1eb887; width: 58px; text-align: center; padding: 0; line-height: 29px; }
.stab:nth-child(2) { width: 90px; text-align: center; padding: 0; }
.stab:nth-child(3) { width: 110px; text-align: center; padding: 0; }
.tools { margin-left: auto; display: flex; gap: 12px; align-items: center; height: 28px; padding-right: 2px; }
.blue { color: #5b9df5 !important; }
.red { color: #f5483b !important; }
.mark { font-family: Inter, sans-serif; font-size: 7.5px; }
.legend { font-family: Inter, sans-serif; font-size: 9px; }
.legend.top { font-size: 8.52px; }
.grey { fill: #8b8f99; }
.val { fill: #f25858; }
.tiny { font-size: 5px; fill: #555; font-family: Inter, sans-serif; }
.axis { font-family: Inter, sans-serif; font-size: 8.8px; fill: #8b8f99; }
.tag { font-family: Inter, sans-serif; font-size: 8.8px; fill: #fff; }
.indicator { font-family: Inter, sans-serif; font-size: 8.5px; fill: #8b8f99; }
.hc-title { font-family: "Open Sans", sans-serif; font-size: 11.12px; fill: #666; }
.hc-full { font-family: "Open Sans", sans-serif; font-size: 9px; font-weight: 600; fill: #555; }
.hc-zoom { font-family: "Open Sans", sans-serif; font-size: 9.5px; fill: #666; }
.hc-btn { font-family: "Open Sans", sans-serif; font-size: 9.5px; fill: #ccc; }
.hc-btn.on { fill: #222; font-weight: 700; }
.hc-axis { font-family: "Open Sans", sans-serif; font-size: 9px; fill: #666; }
.hc-side { font-family: "Open Sans", sans-serif; font-size: 9px; fill: #666; letter-spacing: .3px; }
.hc-legend { font-family: "Open Sans", sans-serif; font-size: 9.5px; font-weight: 700; fill: #333; }
.hc-nav { font-family: "Open Sans", sans-serif; font-size: 9px; fill: #aebccf; }
</style>
